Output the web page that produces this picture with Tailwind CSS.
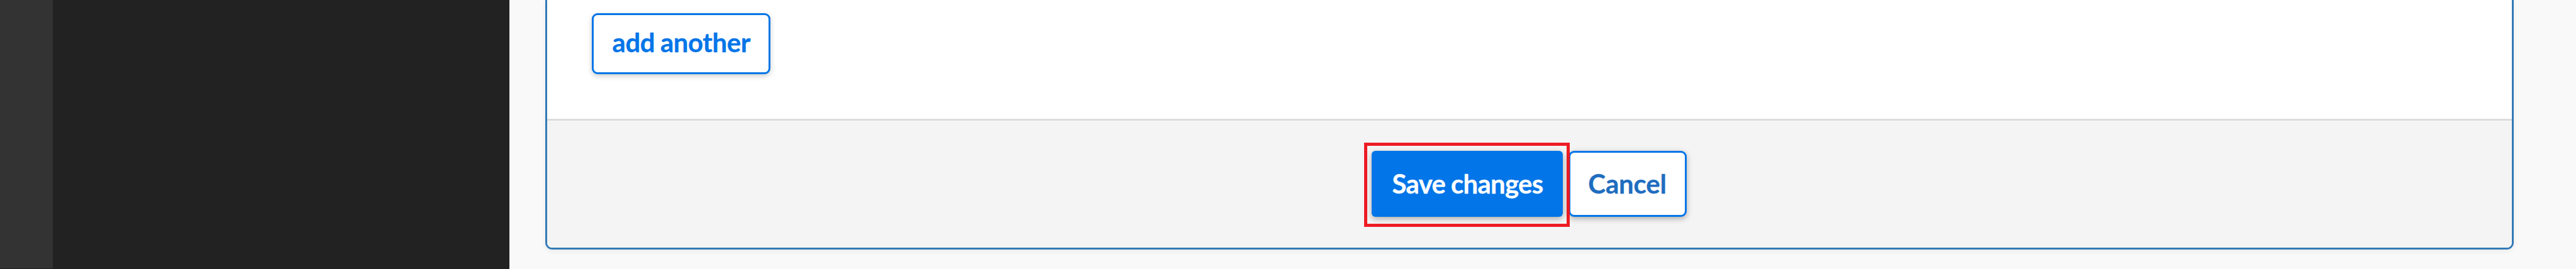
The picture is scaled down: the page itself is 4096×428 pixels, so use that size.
<!DOCTYPE html>
<html lang="en">
<head>
<meta charset="utf-8">
<title>Edit</title>
<script src="https://cdn.jsdelivr.net/npm/@tailwindcss/browser@4"></script>
</head>
<body class="h-[428px] w-[4096px] overflow-hidden bg-[#f9f9f9] font-['Lato',sans-serif]">
<div class="flex h-full w-full">
  <nav class="w-[84.4px] shrink-0 border-b border-[#231f20] bg-[#333]"></nav>
  <aside class="w-[725.6px] shrink-0 border-b border-[#231f20] bg-[#222]"></aside>
  <main class="flex grow pl-[57px] pr-[99.5px] pb-[31.5px]">
    <section class="flex grow flex-col rounded-b-[11px] border-x-3 border-b-3 border-[#337ab7] bg-white shadow-[0_3px_9px_rgba(0,0,0,0.06)]">
      <div class="h-[189px] shrink-0 pl-[71px] pt-[21px]">
        <button class="flex h-[97px] w-[284.5px] items-center justify-center rounded-[9px] border-3 border-[#0275e8] bg-white pb-[4px] text-[42px] font-bold tracking-[-0.45px] text-[#0275e8] shadow-[0_3px_9px_rgba(0,0,0,0.2)] [-webkit-text-stroke:0.3px] [word-spacing:-1px]">add another</button>
      </div>
      <footer class="flex grow items-start rounded-b-[8px] border-t-3 border-[#dcdcdc] bg-[#f4f4f4] pl-[1299px] pt-[35px]">
        <div class="z-10 flex h-[133.5px] w-[327px] shrink-0 items-start border-5 border-[#ed1c24] pl-[7.5px] pt-[8px]">
          <button class="flex h-[105.3px] w-[304px] items-center justify-center rounded-[6px] bg-[#0275e8] pb-[1px] text-[42px] font-bold tracking-[-0.75px] text-white shadow-[0_3px_10px_rgba(0,0,0,0.3)] [-webkit-text-stroke:0.3px] [word-spacing:-0.5px]">Save changes</button>
        </div>
        <button class="-ml-[2px] mt-[13px] flex h-[105.3px] w-[188px] items-center justify-center rounded-[9px] border-3 border-[#0275e8] bg-white pr-[1px] pb-[1px] text-[42px] font-bold tracking-[-0.2px] text-[#1f6dbf] shadow-[0_3px_10px_rgba(0,0,0,0.3)] [-webkit-text-stroke:0.3px]">Cancel</button>
      </footer>
    </section>
  </main>
</div>
</body>
</html>
